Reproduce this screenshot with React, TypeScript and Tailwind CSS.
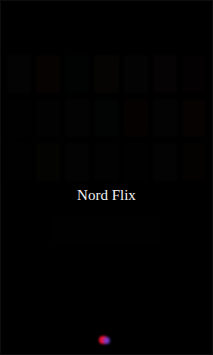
import React from 'react';

const posterRows: string[][] = [
    ['#2a2a30', '#4a1a14', '#10202a', '#3a3018', '#2a2a2a', '#3a2a22', '#2a1010'],
    ['#101418', '#181c20', '#22262e', '#1c2024', '#3a1410', '#2a2a2e', '#3a1812'],
    ['#14100c', '#2a2418', '#20242a', '#1c1c20', '#141414', '#22262a', '#2a1a10'],
];

export default function App() {
    return (
        <div className="relative h-[355px] w-full overflow-hidden bg-black border border-[#0d0d0d]" style={{ fontFamily: '"Liberation Serif", "Times New Roman", serif' }}>
            {/* faint poster wall behind the splash */}
            <div className="absolute inset-0 flex flex-col gap-[6px] px-[6px] pt-[54px] opacity-[0.09] blur-[1px]">
                {posterRows.map((row, i) => (
                    <div key={i} className="grid grid-cols-7 gap-[5px] h-[38px]">
                        {row.map((c, j) => (
                            <div key={j} className="rounded-[2px]" style={{ backgroundColor: c }} />
                        ))}
                    </div>
                ))}
                <div className="mx-auto mt-[28px] h-[30px] w-[110px] rounded-[2px] bg-[#14161a] opacity-60" />
            </div>

            <div className="relative flex h-full flex-col items-center">
                <div className="pt-[184px] text-[15px] leading-[20px] text-[#f2f2f2]">Nord Flix</div>
                <div className="flex-1" />
                <div className="mb-[10px] mr-[4px] flex items-center blur-[0.8px]">
                    <div className="h-[8px] w-[9px] rounded-full bg-[#f01030]" />
                    <div className="-ml-[5px] h-[7px] w-[7px] rounded-full bg-[#7040e0] opacity-80" />
                </div>
            </div>
        </div>
    );
}
